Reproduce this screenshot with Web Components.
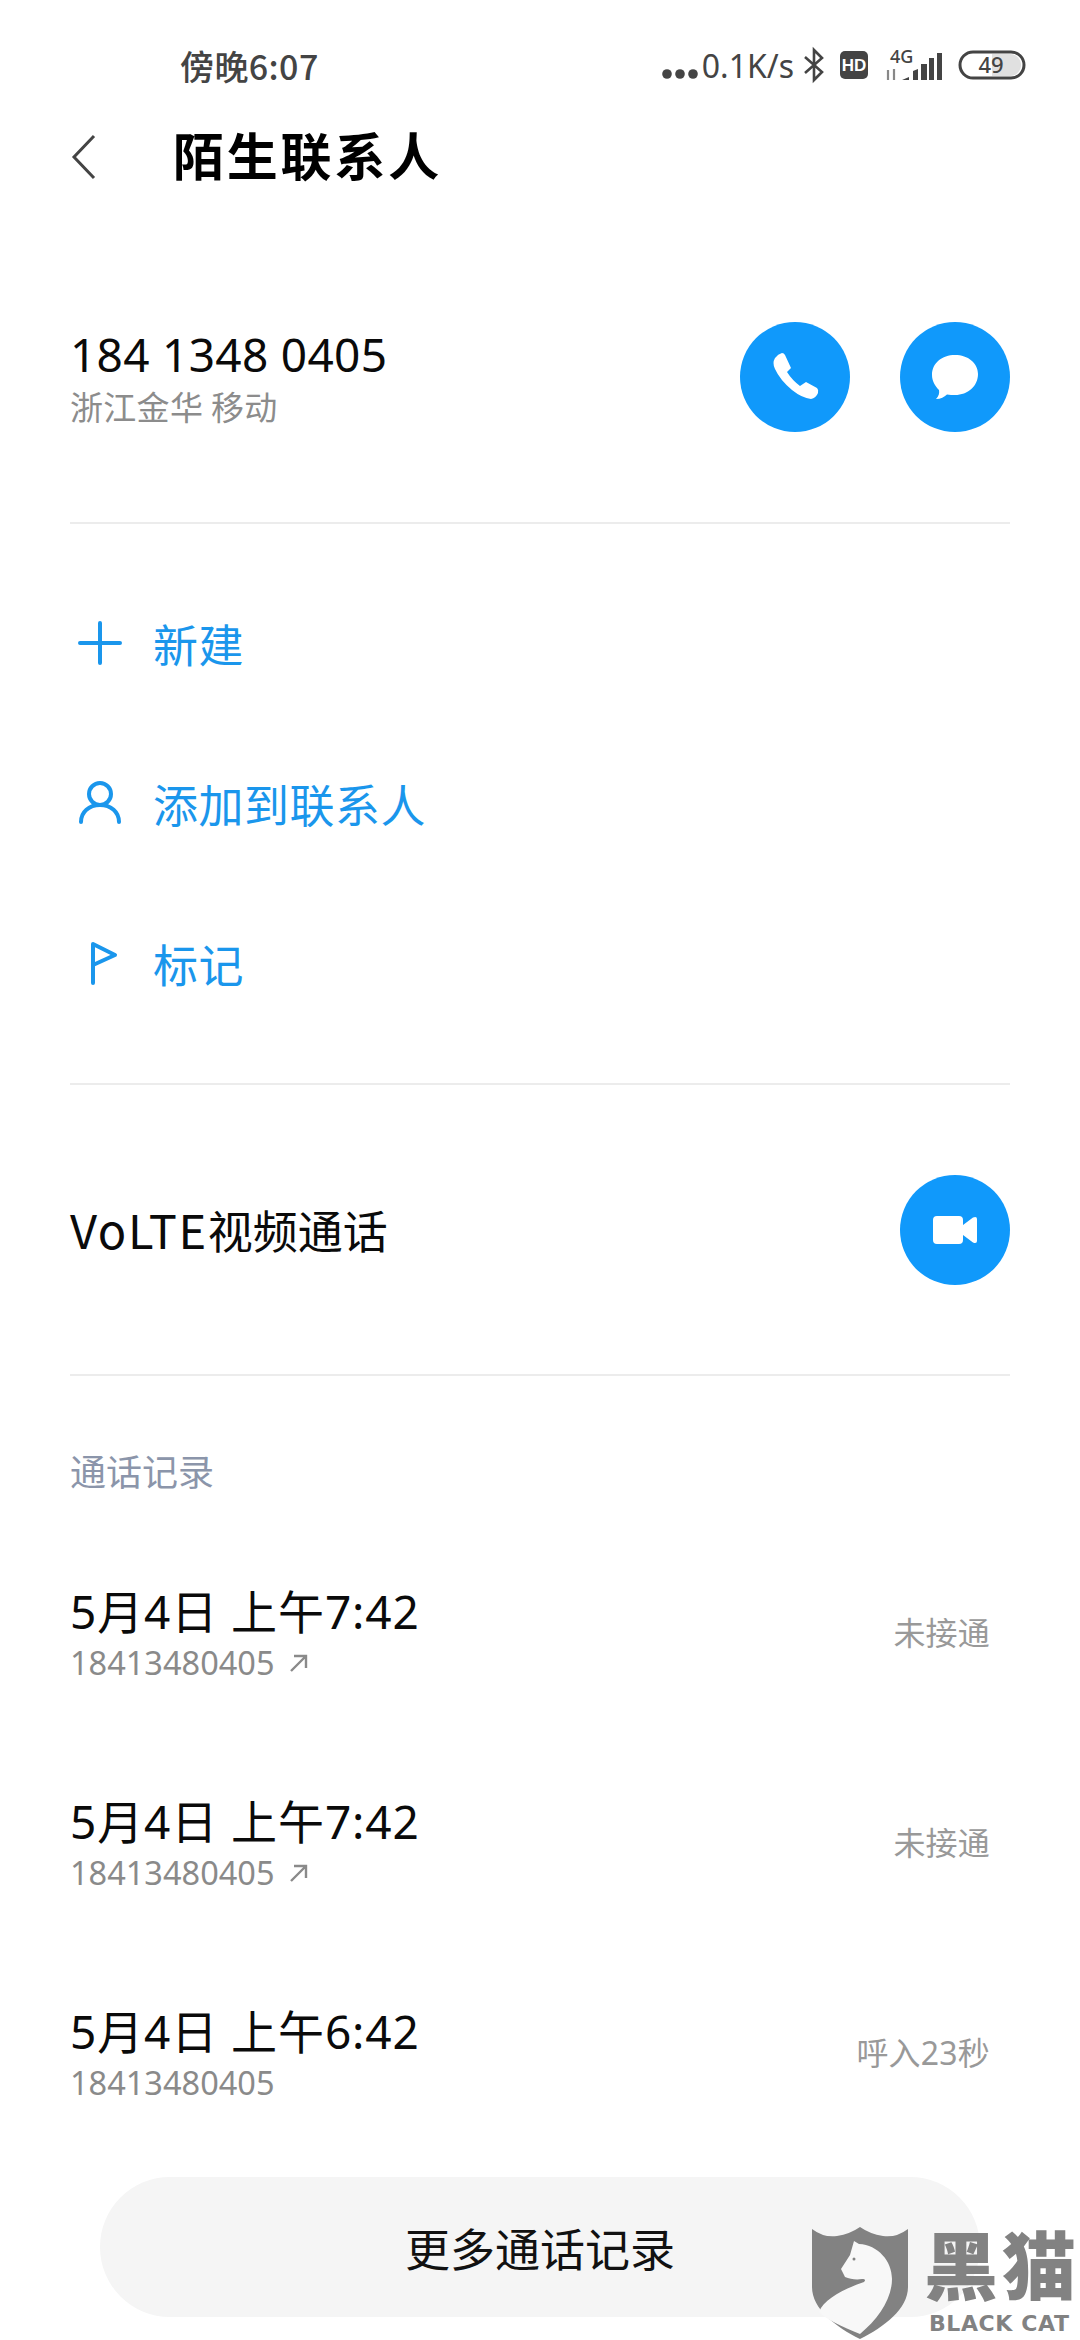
<!DOCTYPE html>
<html lang="zh"><head><meta charset="utf-8">
<style>
html,body{margin:0;padding:0;background:#fff;overflow:hidden;width:1080px;height:2340px}
body{font-family:"Noto Sans CJK SC","Noto Sans",sans-serif;position:relative}
</style></head><body>
<app-status></app-status>
<app-header>陌生联系人</app-header>
<number-card number="184 1348 0405" place="浙江金华 移动"></number-card>
<x-rule></x-rule>
<action-list>
  <action-row icon="plus">新建</action-row>
  <action-row icon="person">添加到联系人</action-row>
  <action-row icon="flag">标记</action-row>
</action-list>
<x-rule></x-rule>
<video-row><span style="font-size:47px;letter-spacing:1.6px">VoLTE</span>视频通话</video-row>
<x-rule></x-rule>
<call-log>
  <call-item when="5月4日 上午7:42" num="18413480405" state="未接通" out></call-item>
  <call-item when="5月4日 上午7:42" num="18413480405" state="未接通" out></call-item>
  <call-item when="5月4日 上午6:42" num="18413480405" state="呼入23秒"></call-item>
</call-log>
<more-button>更多通话记录</more-button>
<black-cat></black-cat>
<script>
const ICON={
 phone:'<svg width="110" height="110" viewBox="0 0 110 110"><path fill="#fff" d="M35 36Q38 32 42 31Q44 31 45 33L51 46L47 50Q52 58 60 64L66 60L77 66Q79 68 78 71Q76 76 71 77Q62 76 52 68Q40 58 35 47Q32 41 35 36z"/></svg>',
 chat:'<svg width="110" height="110" viewBox="0 0 110 110"><path fill="#fff" d="M55 33C68 33 78 41 78 52C78 64 68 73 55 73C52 73 50 73 47 72.5C44 75 41 77 36 77C39 74 39.5 71 39 68C35 64 32 59 32 53C32 41 42 33 55 33z"/></svg>',
 video:'<svg width="110" height="110" viewBox="0 0 110 110"><path fill="#fff" d="M37 41H59A4 4 0 0 1 63 45V50L73 42.500Q77 41 77 44V66Q77 69 73 67.500L63 60V65A4 4 0 0 1 59 69H37A4 4 0 0 1 33 65V45A4 4 0 0 1 37 41z"/></svg>',
 plus:'<svg width="46" height="46" viewBox="0 0 46 46"><path d="M3 23h40M23 3v40" stroke="#1a96ec" stroke-width="4" stroke-linecap="round" fill="none"/></svg>',
 person:'<svg width="46" height="46" viewBox="0 0 46 46"><circle cx="23" cy="14" r="11" stroke="#1a96ec" stroke-width="4" fill="none"/><path d="M4 42c0-10 8-17 19-17s19 7 19 17" stroke="#1a96ec" stroke-width="4" stroke-linecap="round" fill="none"/></svg>',
 flag:'<svg width="46" height="46" viewBox="0 0 46 46"><path d="M16 43V4l22 11-22 10" stroke="#1a96ec" stroke-width="4" stroke-linecap="round" stroke-linejoin="round" fill="none"/></svg>'
};
function def(name,css,html){
  customElements.define(name,class extends HTMLElement{
    constructor(){super();this.attachShadow({mode:'open'});}
    connectedCallback(){
      const h=typeof html==='function'?html(this):html;
      this.shadowRoot.innerHTML='<style>'+css+'</style>'+h;
    }
  });
}
def('app-status',`:host{display:flex;align-items:center;height:130px;padding:0 54px 0 180px;box-sizing:border-box;color:#444;font-family:"Noto Sans CJK SC",sans-serif}
.t{font-size:34px;font-weight:500;flex:1;letter-spacing:.4px}
.r{display:flex;align-items:center;height:40px}
svg{overflow:visible;flex:none}
.s{font:32px "Noto Sans","Noto Sans CJK SC",sans-serif;margin-left:3px}`,
`<span class="t">傍晚6:07</span><div class="r">
<svg width="38" height="14" viewBox="0 0 38 14" style="margin-top:18px"><circle cx="6" cy="7" r="4.8" fill="#444"/><circle cx="19" cy="7" r="4.8" fill="#444"/><circle cx="32" cy="7" r="4.8" fill="#444"/></svg>
<span class="s">0.1K/s</span>
<svg width="24" height="34" viewBox="0 0 24 34" style="margin-left:8px"><path d="M3 9l17 15-8 8V2l8 8L3 25" fill="none" stroke="#444" stroke-width="2.6"/></svg>
<svg width="28" height="30" viewBox="0 0 28 30" style="margin-left:14px"><rect width="28" height="28" rx="5" y="1" fill="#444"/><text x="14" y="21" font-family="Liberation Sans" font-weight="700" font-size="17" fill="#fff" text-anchor="middle">HD</text></svg>
<svg width="60" height="34" viewBox="0 0 60 34" style="margin-left:17px"><text x="5" y="15" font-family="Noto Sans" font-size="18" font-weight="500" fill="#444">4G</text>
<path d="M3 32V22M9 32V21" stroke="#888" stroke-width="2.2"/>
<path d="M17 32l7-3v3zM28 32v-9l5-2v11zM36 32V16h6v16zM44 32V10h5v22zM52 32V5h5v27z" fill="#444"/></svg>
<svg width="68" height="30" viewBox="0 0 68 30" style="margin-left:13px"><rect x="2" y="2" width="64" height="26" rx="13" fill="#fff" stroke="#444" stroke-width="3"/><path d="M34 4h18a11 11 0 0 1 0 22H34z" fill="#e0e0e0"/><text x="33" y="23" font-family="Noto Sans" font-size="22" font-weight="500" fill="#444" text-anchor="middle">49</text></svg>
</div>`);
def('app-header',`:host{display:flex;align-items:center;height:48px;padding-left:70px;color:#000}
svg{flex:none;margin-top:6px}
.t{font-size:51px;font-weight:700;margin-left:76px;letter-spacing:2.8px;line-height:48px}`,
`<svg width="27" height="48" viewBox="0 0 27 48"><path d="M24 3L4 24l20 21" fill="none" stroke="#444" stroke-width="3"/></svg><span class="t"><slot></slot></span>`);
def('number-card',`:host{display:flex;align-items:center;height:344px;box-sizing:border-box;padding:54px 70px 0;justify-content:space-between}
.n{font:46px "Noto Sans",sans-serif;color:#0a0a0a;line-height:54px;letter-spacing:.3px}
.p{font-size:33px;color:#8c8c8c;line-height:44px;margin-top:3px;letter-spacing:.3px}
.b{display:flex;gap:50px}
.c{width:110px;height:110px;border-radius:50%;background:#1099fb}`,
el=>`<div><div class="n">${el.getAttribute('number')}</div><div class="p">${el.getAttribute('place')}</div></div>
<div class="b"><div class="c">${ICON.phone}</div><div class="c">${ICON.chat}</div></div>`);
def('x-rule',`:host{display:block;height:2px;margin:0 70px;background:#ececec}`,'');
def('action-list',`:host{display:block;padding:39px 0 0;height:559px;box-sizing:border-box}`,'<slot></slot>');
def('action-row',`:host{display:flex;align-items:center;height:160px;padding-left:77px;color:#1a96ec}
.t{font-size:45px;margin-left:30px;letter-spacing:.5px}
svg{flex:none;display:block}`,
el=>ICON[el.getAttribute('icon')]+'<span class="t"><slot></slot></span>');
def('video-row',`:host{display:flex;align-items:center;justify-content:space-between;height:289px;padding:0 70px;box-sizing:border-box}
.t{font-size:45px;color:#0a0a0a;position:relative;top:-1px}
.c{width:110px;height:110px;border-radius:50%;background:#1099fb}`,
`<span class="t"><slot></slot></span><div class="c">${ICON.video}</div>`);
def('call-log',`:host{display:block;padding-top:70px}
.h{font-size:36px;color:#8b95aa;line-height:48px;padding-left:70px;margin-bottom:35px}`,
`<div class="h">通话记录</div><slot></slot>`);
def('call-item',`:host{display:flex;align-items:center;justify-content:space-between;height:210px;padding:0 90px 0 70px;box-sizing:border-box}
.w{font-size:46px;color:#0a0a0a;line-height:58px;letter-spacing:.9px;font-family:"Noto Sans","Noto Sans CJK SC",sans-serif;margin-top:-2px}
.n{font:32.500px "Noto Sans",sans-serif;color:#8a8a8a;line-height:44px;display:flex;align-items:center;gap:14px;padding-top:1px}
.s{font-size:32px;color:#999;letter-spacing:.2px;font-family:"Noto Sans","Noto Sans CJK SC",sans-serif;margin-top:-6px}`,
el=>`<div><div class="w">${el.getAttribute('when')}</div><div class="n">${el.getAttribute('num')}${el.hasAttribute('out')?'<svg width="20" height="20" viewBox="0 0 20 20"><path d="M2 18L17 3M5 3h12v12" fill="none" stroke="#8a8a8a" stroke-width="2.4"/></svg>':''}</div></div><span class="s">${el.getAttribute('state')}</span>`);
def('more-button',`:host{position:absolute;left:100px;top:2177px;width:880px;height:140px;border-radius:70px;background:#f5f5f5;display:flex;align-items:center;justify-content:center;font-size:45px;color:#111}`,'<slot></slot>');
def('black-cat',`:host{position:absolute;left:812px;top:2227px;width:268px;height:113px;color:#828282}
svg{position:absolute;left:0;top:0}
.a{position:absolute;left:112px;top:-8px;font-size:74px;font-weight:900;line-height:86px;white-space:nowrap;letter-spacing:4px}
.b{position:absolute;left:117px;top:85px;font:700 22px/24px "DejaVu Sans",sans-serif;letter-spacing:.6px;white-space:nowrap}`,
`<svg width="96" height="112" viewBox="0 0 96 112"><path fill="#828282" d="M0 2Q12 11 25 9Q38 7 48 0Q58 7 71 9Q84 11 96 2V60C96 82 72 100 48 112C24 100 0 82 0 60z"/><path fill="#f8f8f8" d="M42 14L47 17C66 18 80 34 80 52C80 72 66 92 48 107C30 100 14 92 7 85C12 72 32 62 52 55C54 53 53 52 50 52C44 53 38 52 33 50L29 42L38 28z"/><circle cx="42" cy="32" r="1.500" fill="#828282"/></svg><span class="a">黑猫</span><span class="b">BLACK CAT</span>`);
</script>
</body></html>
